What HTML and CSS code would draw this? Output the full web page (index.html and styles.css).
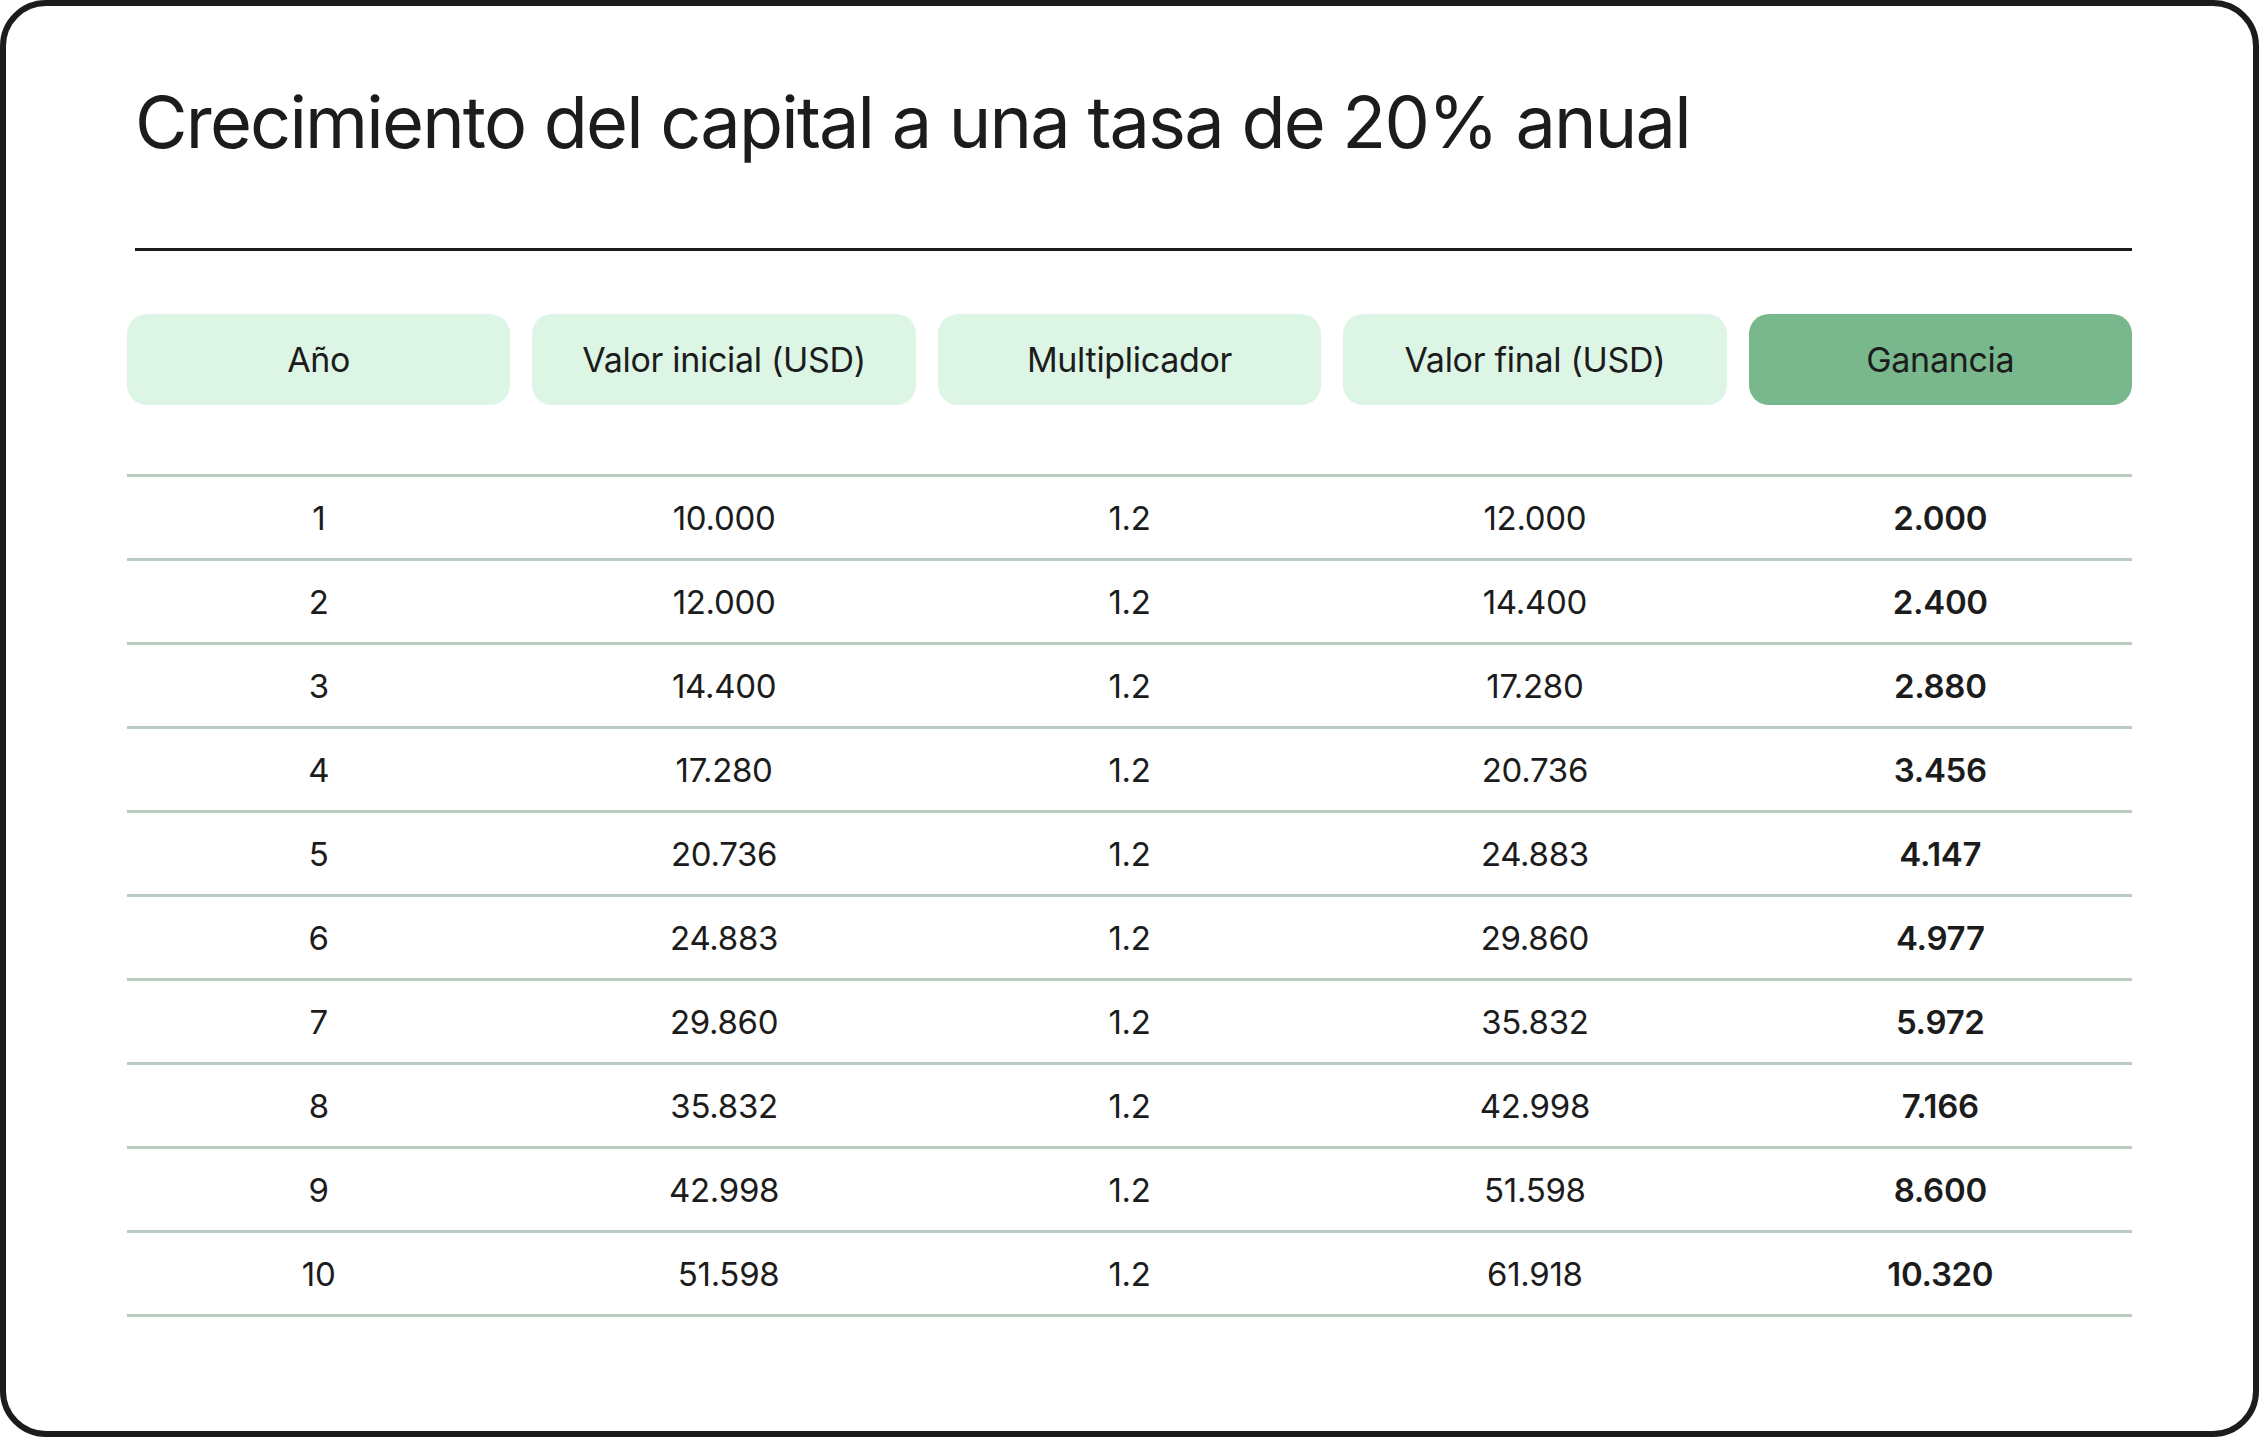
FILE: index.html
```html
<!DOCTYPE html>
<html lang="es">
<head>
<meta charset="utf-8">
<title>Crecimiento del capital</title>
<link rel="stylesheet" href="styles.css">
</head>
<body>
<main class="card">
  <h1 class="title">Crecimiento del capital a una tasa de 20% anual</h1>
  <hr class="rule">
  <div class="heads">
    <div class="pill">Año</div>
    <div class="pill">Valor inicial (USD)</div>
    <div class="pill">Multiplicador</div>
    <div class="pill">Valor final (USD)</div>
    <div class="pill pill-accent">Ganancia</div>
  </div>
  <div class="rows">
    <div class="row"><span>1</span><span>10.000</span><span>1.2</span><span>12.000</span><span class="gain">2.000</span></div>
    <div class="row"><span>2</span><span>12.000</span><span>1.2</span><span>14.400</span><span class="gain">2.400</span></div>
    <div class="row"><span>3</span><span>14.400</span><span>1.2</span><span>17.280</span><span class="gain">2.880</span></div>
    <div class="row"><span>4</span><span>17.280</span><span>1.2</span><span>20.736</span><span class="gain">3.456</span></div>
    <div class="row"><span>5</span><span>20.736</span><span>1.2</span><span>24.883</span><span class="gain">4.147</span></div>
    <div class="row"><span>6</span><span>24.883</span><span>1.2</span><span>29.860</span><span class="gain">4.977</span></div>
    <div class="row"><span>7</span><span>29.860</span><span>1.2</span><span>35.832</span><span class="gain">5.972</span></div>
    <div class="row"><span>8</span><span>35.832</span><span>1.2</span><span>42.998</span><span class="gain">7.166</span></div>
    <div class="row"><span>9</span><span>42.998</span><span>1.2</span><span>51.598</span><span class="gain">8.600</span></div>
    <div class="row"><span>10</span><span>&nbsp;51.598</span><span>1.2</span><span>61.918</span><span class="gain">10.320</span></div>
  </div>
</main>
</body>
</html>
```
FILE: styles.css
```css
* { box-sizing: border-box; }
html, body { margin: 0; padding: 0; background: #ffffff; }
body {
  font-family: Inter, "Noto Sans", "Liberation Sans", sans-serif;
  color: #1c1c1c;
}
.card {
  width: 2259px;
  height: 1437px;
  border: 6px solid #1c1c1c;
  border-radius: 46px;
  padding: 72px 121px 0 121px;
  background: #ffffff;
}
.title {
  margin: 0 0 0 8px;
  font-size: 72px;
  line-height: 88px;
  font-weight: 400;
  letter-spacing: -1.8px;
}
.rule {
  margin: 82px 0 0 8px;
  border: 0;
  height: 3px;
  background: #1c1c1c;
}
.heads {
  margin-top: 63px;
  display: grid;
  grid-template-columns: repeat(5, 1fr);
  column-gap: 22px;
}
.pill {
  height: 91px;
  border-radius: 20px;
  background: #ddf5e5;
  display: flex;
  align-items: center;
  justify-content: center;
  font-size: 34px;
  letter-spacing: -0.3px;
}
.pill-accent { background: #78b88c; }
.rows {
  margin-top: 69px;
  border-top: 3px solid #bacbbf;
}
.row {
  display: grid;
  grid-template-columns: repeat(5, 1fr);
  column-gap: 22px;
  height: 84px;
  border-bottom: 3px solid #bacbbf;
  align-items: center;
  text-align: center;
  font-size: 33px;
  letter-spacing: -0.3px;
}
.gain { font-weight: 600; }
```
